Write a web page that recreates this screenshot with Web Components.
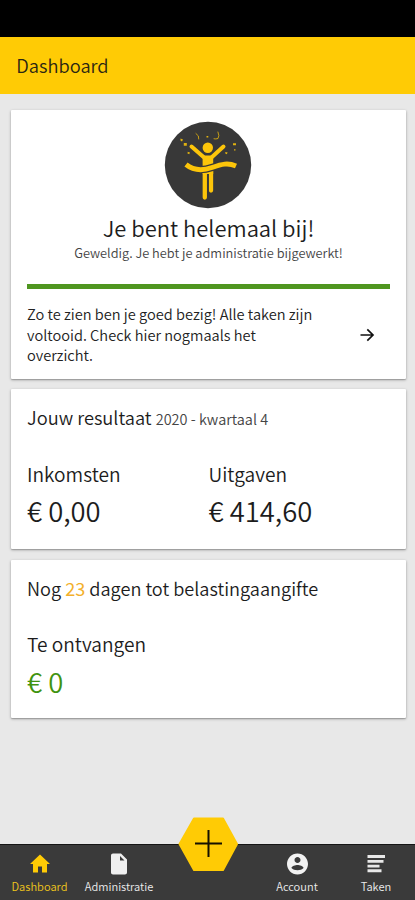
<!DOCTYPE html>
<html lang="nl"><head><meta charset="utf-8"><title>Dashboard</title>
<style>
body{margin:0;background:#e8e8e8;font-family:"Noto Sans CJK SC","Source Sans Pro",sans-serif;font-weight:350;color:#1c1c1c}
</style></head><body>
<app-screen>
  <app-header slot="header">Dashboard</app-header>
  <status-card></status-card>
  <result-card></result-card>
  <tax-card></tax-card>
  <nav-bar slot="nav"></nav-bar>
</app-screen>
<script>
function define(name, css, html) {
  customElements.define(name, class extends HTMLElement {
    constructor() {
      super();
      this.attachShadow({mode: 'open'}).innerHTML = `<style>:host,*{box-sizing:border-box}${css}</style>${html}`;
    }
  });
}
define('app-screen', `
:host{display:flex;flex-direction:column;height:900px;background:#e8e8e8}
main{flex:1;min-height:0;padding:15.5px 9px 0 11px;display:flex;flex-direction:column;gap:10.5px}`,
`<slot name="header"></slot><main><slot></slot></main><slot name="nav"></slot>`);

define('app-header', `
:host{display:flex;flex-direction:column;height:94px;border-top:37.5px solid #000;background:#ffcb05;padding:14px 16.3px 0;font-size:18.3px;line-height:28px;color:#2b2613}
`, `<span><slot></slot></span>`);

define('ui-card', `
:host{display:block;background:#fff;border-radius:1px;padding:0 16px;box-shadow:0 1px 3px rgba(0,0,0,.3),0 1px 1px rgba(0,0,0,.16)}`,
`<slot></slot>`);

define('celebrate-icon', `:host{display:block;width:88px;height:88px;margin-right:1px}svg{display:block}`,
`<svg width="88" height="88" viewBox="0 0 88 88">
<circle cx="44" cy="44" r="43.2" fill="#383838"/>
<g fill="none" stroke="#fcc50a" stroke-linecap="round" stroke-linejoin="round">
<path d="M27.500 25.500 39.500 36M59.500 25.500 48 36" stroke-width="4"/>
<path d="M40.800 50v26.500M47 50v19.500" stroke-width="4.300"/>
<path d="M32 12.500q3.500 2 2.800 5.500M54 11q1.800 4 0 6.500-2 .8-4 .3" stroke-width=".9" opacity=".8"/>
</g>
<g fill="#fcc50a" opacity=".85">
<path d="M16.500 17.500l2.500 1-1 2-1.500-1zM19.800 22h3v2.800h-3zM23.700 30.800l2.300.7-.8 1.800-1.700-.8zM42.500 15h1.800v1.500h-1.800zM69 22.200h3v2h-3zM61.300 31l2.400.4-1 1.900-1.400-.7zM70 28.200h1.500v1.200H70z"/>
</g>
<circle cx="43.800" cy="26.700" r="5.200" fill="#fcc50a"/>
<path d="M38.600 34.500h10.600V53H38.600z" fill="#fcc50a"/>
<path d="M44 53v24" stroke="#383838" stroke-width="1.500"/>
<path d="M22 43.500c8 6.500 16 6.500 26 3s16-5 24-1.500" fill="none" stroke="#383838" stroke-width="7.200"/>
<path d="M22 43.500c8 6.500 16 6.500 26 3s16-5 24-1.500" fill="none" stroke="#fcc50a" stroke-width="5"/>
</svg>`);

define('status-card', `
ui-card{height:269px;padding-top:11.200px;display:flex;flex-direction:column;align-items:center}
h1{margin:5.800px 0 0;font-weight:inherit;font-size:21.950px;line-height:28px}
p{margin:.8px 0 0;font-size:12.800px;line-height:20px;color:#444}
hr{width:100%;height:5px;margin:20.500px 0 15.700px;border:0;background:#4f9620;flex:none}
.row{width:100%;display:flex;align-items:center;justify-content:space-between;font-size:14.600px;line-height:20.400px;color:#222}
.arrow{margin-right:15px;display:block}`,
`<ui-card><celebrate-icon></celebrate-icon><h1>Je bent helemaal bij!</h1><p>Geweldig. Je hebt je administratie bijgewerkt!</p><hr>
<div class="row"><span>Zo te zien ben je goed bezig! Alle taken zijn<br>voltooid. Check hier nogmaals het<br>overzicht.</span>
<svg class="arrow" width="16" height="16" viewBox="0 0 16 16" fill="none" stroke="#111" stroke-width="1.700"><path d="M1.500 8H14M8.300 2.300 14 8l-5.700 5.700"/></svg></div></ui-card>`);

define('amount-block', `
:host{display:block}
.l{font-size:19.150px;line-height:28px}
.v{font-size:27.400px;line-height:38px;margin-top:3.500px;color:var(--amount,#1c1c1c)}`,
`<div class="l"><slot></slot></div><div class="v"><slot name="value"></slot></div>`);

define('result-card', `
ui-card{height:160px;padding-top:14.500px}
h2{margin:0 0 28.300px;font-weight:inherit;font-size:18.250px;line-height:26px}
small{font-size:14.500px;color:#444}
.cols{display:grid;grid-template-columns:1fr 1fr}`,
`<ui-card><h2>Jouw resultaat <small>2020 - kwartaal 4</small></h2>
<div class="cols"><amount-block>Inkomsten<span slot="value">€ 0,00</span></amount-block><amount-block>Uitgaven<span slot="value">€ 414,60</span></amount-block></div></ui-card>`);

define('tax-card', `
ui-card{height:158px;padding-top:15px}
h2{margin:0 0 29.700px;font-weight:inherit;font-size:18.150px;line-height:26px}
b{font-weight:400;color:#f3b02c}
amount-block{--amount:#3f930f}`,
`<ui-card><h2>Nog <b>23</b> dagen tot belastingaangifte</h2><amount-block>Te ontvangen<span slot="value">€ 0</span></amount-block></ui-card>`);

define('nav-item', `
:host{display:flex;flex-direction:column;align-items:center;padding-top:6.500px;color:#ececec;font-size:11.100px;line-height:16px}
:host([active]){color:#f0c61a}
span{margin-top:2.500px;white-space:nowrap}`,
`<slot name="icon"></slot><span><slot></slot></span>`);

define('nav-bar', `
:host{display:grid;grid-template-columns:79px 80px 98px 80px 78px;height:56px;background:#3a3a3a;border-top:1px solid #151515;position:relative}
svg{display:block}
.add{position:absolute;left:177px;top:-30px}
.gap{display:block}`,
`<nav-item active><svg slot="icon" width="24" height="24" viewBox="0 0 24 24" fill="#ffcb05"><path d="M10 20.500v-6h4v6h5v-8.500h3L12 2.500 2 12h3v8.500z"/></svg>Dashboard</nav-item>
<nav-item><svg slot="icon" width="24" height="24" viewBox="0 0 24 24"><path fill="#efefef" d="M6 1.500c-1.100 0-2 .9-2 2v17c0 1.100.9 2 2 2h12c1.100 0 2-.9 2-2V7.500l-6-6H6zm7 7V4l4.500 4.500H13z"/></svg>Administratie</nav-item>
<span class="gap"></span>
<nav-item><svg slot="icon" width="25" height="24" viewBox="0 0 24 24"><path fill="#f2f2f2" d="M12 1.500C6.200 1.500 1.500 6.200 1.500 12S6.200 22.500 12 22.500 22.500 17.800 22.500 12 17.800 1.500 12 1.500zM12 5c1.660 0 3 1.340 3 3s-1.340 3-3 3-3-1.340-3-3 1.340-3 3-3zm0 13.200c-2.500 0-4.710-.8-6-2.220.03-1.990 4-3.080 6-3.080s5.970 1.090 6 3.080c-1.290 1.420-3.500 2.220-6 2.220z"/></svg>Account</nav-item>
<nav-item><svg slot="icon" width="24" height="24" viewBox="0 0 24 24" fill="#e8e8e8"><path d="M3.500 3h17.500v3H3.500zM3.500 8h16v2.700h-16zM3.500 12.700h12v2.700h-12zM3.500 17.300h14V20.300h-14z"/></svg>Taken</nav-item>
<svg class="add" width="62" height="57" viewBox="0 0 62 57"><path d="M17 3.500H46L60 29 46 55H17L2.500 29z" fill="#ffcb05" stroke="#ffcb05" stroke-width="2" stroke-linejoin="round"/><path d="M18 28.500h27M31.500 15v27" stroke="#151000" stroke-width="2"/></svg>`);
</script></body></html>
